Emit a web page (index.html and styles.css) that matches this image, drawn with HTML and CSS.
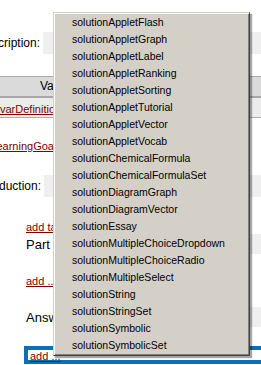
FILE: index.html
```html
<!DOCTYPE html>
<html lang="en">
<head>
    <meta charset="UTF-8">
    <title>Solution editor</title>
    <link rel="stylesheet" href="styles.css">
</head>
<body>
    <div class="page">
        <div class="field-row desc-row">
            <span class="field-label">Description:</span>
            <span class="field-input"></span>
        </div>

        <div class="var-table">
            <div class="var-head">
                <span class="head-cell">Value</span>
                <span class="head-cell head-last"></span>
            </div>
            <div class="var-row">
                <a href="#" class="link">varDefinition</a>
            </div>
        </div>

        <div class="goal-row">
            <a href="#" class="link">learningGoal</a>
        </div>

        <div class="field-row intro-row">
            <span class="field-label">Introduction:</span>
            <span class="field-input"></span>
        </div>

        <div class="parts">
            <a href="#" class="link">add task</a>
            <div class="part-row">
                <span class="part-label">Part</span>
                <span class="part-input"></span>
            </div>
            <a href="#" class="link add-more">add ...</a>
            <div class="part-row answer-row">
                <span class="part-label">Answer</span>
                <span class="part-input"></span>
            </div>
            <div class="focus-box">
                <a href="#" class="link">add ...</a>
            </div>
        </div>
    </div>

    <ul class="menu">
        <li>solutionAppletFlash</li>
        <li>solutionAppletGraph</li>
        <li>solutionAppletLabel</li>
        <li>solutionAppletRanking</li>
        <li>solutionAppletSorting</li>
        <li>solutionAppletTutorial</li>
        <li>solutionAppletVector</li>
        <li>solutionAppletVocab</li>
        <li>solutionChemicalFormula</li>
        <li>solutionChemicalFormulaSet</li>
        <li>solutionDiagramGraph</li>
        <li>solutionDiagramVector</li>
        <li>solutionEssay</li>
        <li>solutionMultipleChoiceDropdown</li>
        <li>solutionMultipleChoiceRadio</li>
        <li>solutionMultipleSelect</li>
        <li>solutionString</li>
        <li>solutionStringSet</li>
        <li>solutionSymbolic</li>
        <li>solutionSymbolicSet</li>
    </ul>
</body>
</html>
```

FILE: styles.css
```css
body {
    margin: 0;
    background-color: #fff;
    font-family: "Liberation Sans", Arial, sans-serif;
    color: #000;
    overflow: hidden;
    width: 261px;
    height: 365px;
    position: relative;
}

.page {
    margin-left: -40px;
}

.link {
    color: #800000;
    font-size: 11px;
    line-height: 14px;
    text-decoration: underline;
}

.field-row {
    display: grid;
    grid-template-columns: 80px 1fr;
    column-gap: 3px;
    align-items: center;
    height: 22px;
}

.desc-row {
    margin-top: 32px;
}

.field-label {
    text-align: right;
    font-size: 12px;
}

.field-input {
    height: 22px;
    background-color: #efefef;
}

.var-table {
    margin-top: 22px;
    border-top: 1px solid #a8a8a8;
}

.var-head {
    display: flex;
    height: 19px;
    background-color: #dadada;
    border-bottom: 2px solid #a8a8a8;
}

.head-cell {
    flex: 1;
    padding-left: 80px;
    font-size: 12px;
    line-height: 19px;
}

.head-last {
    flex: 0 0 7px;
    padding: 0;
    border-left: 1px solid #999;
    border-right: 1px solid #999;
    margin-right: -10px;
}

.var-row {
    height: 19px;
    line-height: 19px;
    background-color: #ececec;
    border-bottom: 1px solid #b0b0b0;
    padding-left: 40px;
}

.goal-row {
    margin-top: 18px;
    margin-left: 34px;
}

.intro-row {
    margin-top: 21px;
    grid-template-columns: 81px 1fr;
}

.parts {
    display: flex;
    flex-direction: column;
    align-items: flex-start;
    padding-left: 66px;
    margin-top: 23px;
}

.part-row {
    display: flex;
    align-items: center;
    align-self: stretch;
    height: 20px;
}

.part-label {
    font-size: 13px;
    width: 60px;
}

.part-input {
    flex: 1;
    height: 20px;
    background-color: #efefef;
}

.add-more {
    margin-top: 20px;
}

.answer-row {
    margin-top: 19px;
}

.focus-box {
    margin-top: 19px;
    margin-left: -2px;
    align-self: stretch;
    height: 10px;
    border: 4px solid #0a70b8;
    border-right: none;
    padding-left: 2px;
    line-height: 10px;
}

.focus-box .link {
    line-height: 10px;
}

.menu {
    position: absolute;
    left: 53px;
    top: 12px;
    width: 195px;
    margin: 0;
    padding: 1px 0 0 0;
    list-style: none;
    background-color: #d4d0c8;
    border-top: 1px solid #d4d0c8;
    border-left: 1px solid #d4d0c8;
    border-right: 1px solid #404040;
    border-bottom: 1px solid #404040;
    box-shadow: inset 1px 1px 0 #fff, inset -1px -1px 0 #808080, 2px 2px 1px rgba(0, 0, 0, 0.35);
    font-size: 10.5px;
}

.menu li {
    height: 17px;
    line-height: 17px;
    padding-left: 18px;
    white-space: nowrap;
}

.menu li:last-child {
    margin-bottom: 1px;
}
```
